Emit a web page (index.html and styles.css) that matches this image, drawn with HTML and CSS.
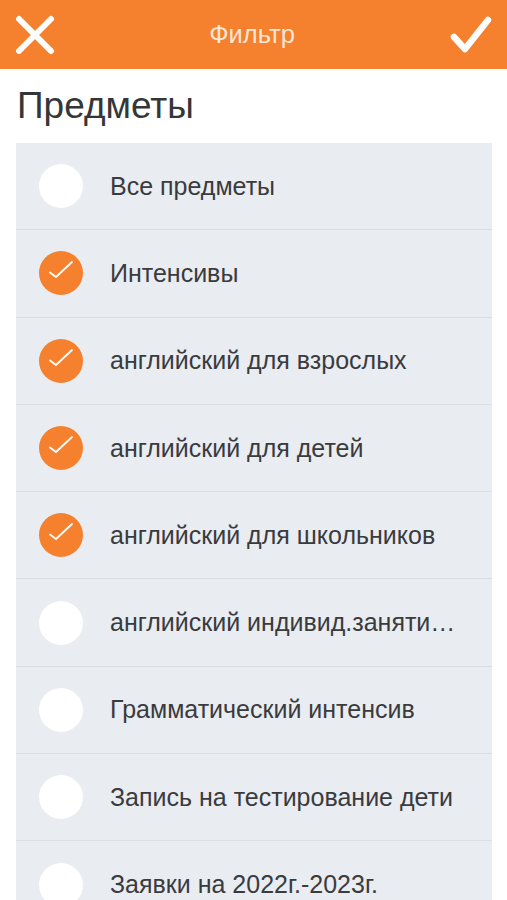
FILE: index.html
```html
<!DOCTYPE html>
<html lang="ru">
<head>
<meta charset="utf-8">
<title>Фильтр</title>
<link rel="stylesheet" href="styles.css">
</head>
<body>
<header class="topbar">
  <button class="icon-btn" aria-label="Закрыть">
    <svg width="40" height="40" viewBox="0 0 40 40"><path d="M4 4 L36 36 M36 4 L4 36" stroke="#fff" stroke-width="6" stroke-linecap="round" fill="none"/></svg>
  </button>
  <div class="topbar-title">Фильтр</div>
  <button class="icon-btn" aria-label="Готово">
    <svg width="44" height="40" viewBox="0 0 44 40"><path d="M5 22 L16 34 L39 5" stroke="#fff" stroke-width="6.5" stroke-linecap="round" stroke-linejoin="round" fill="none"/></svg>
  </button>
</header>
<main class="content">
  <h1 class="section-title">Предметы</h1>
  <ul class="list">
    <li class="row"><span class="radio"></span><span class="label">Все предметы</span></li>
    <li class="row"><span class="radio checked"><svg width="44" height="44" viewBox="0 0 44 44"><path d="M11 21.5 L17 26 L33 11" stroke="#fff" stroke-width="1.8" stroke-linecap="round" stroke-linejoin="round" fill="none"/></svg></span><span class="label">Интенсивы</span></li>
    <li class="row"><span class="radio checked"><svg width="44" height="44" viewBox="0 0 44 44"><path d="M11 21.5 L17 26 L33 11" stroke="#fff" stroke-width="1.8" stroke-linecap="round" stroke-linejoin="round" fill="none"/></svg></span><span class="label">английский для взрослых</span></li>
    <li class="row"><span class="radio checked"><svg width="44" height="44" viewBox="0 0 44 44"><path d="M11 21.5 L17 26 L33 11" stroke="#fff" stroke-width="1.8" stroke-linecap="round" stroke-linejoin="round" fill="none"/></svg></span><span class="label">английский для детей</span></li>
    <li class="row"><span class="radio checked"><svg width="44" height="44" viewBox="0 0 44 44"><path d="M11 21.5 L17 26 L33 11" stroke="#fff" stroke-width="1.8" stroke-linecap="round" stroke-linejoin="round" fill="none"/></svg></span><span class="label">английский для школьников</span></li>
    <li class="row"><span class="radio"></span><span class="label">английский индивид.заняти…</span></li>
    <li class="row"><span class="radio"></span><span class="label">Грамматический интенсив</span></li>
    <li class="row"><span class="radio"></span><span class="label">Запись на тестирование дети</span></li>
    <li class="row"><span class="radio"></span><span class="label">Заявки на 2022г.-2023г.</span></li>
  </ul>
</main>
</body>
</html>
```
FILE: styles.css
```css
* { box-sizing: border-box; }
html, body { margin: 0; padding: 0; background: #fff; }
body {
  font-family: "Liberation Sans", Arial, sans-serif;
  color: #3a3b3d;
  overflow: hidden;
  height: 900px;
}
.topbar {
  height: 69px;
  background: #f5802e;
  display: flex;
  align-items: center;
  justify-content: space-between;
  padding: 0 14px 0 15px;
}
.icon-btn {
  background: none;
  border: 0;
  padding: 0;
  display: flex;
  align-items: center;
}
.topbar-title {
  color: #fde7d6;
  font-size: 25.5px;
}
.content { padding: 0 15px 0 16px; }
.section-title {
  margin: 0;
  font-weight: normal;
  font-size: 37px;
  line-height: 74px;
  padding-left: 1px;
  color: #353638;
}
.list {
  list-style: none;
  margin: 0;
  padding: 0;
  background: #e9ecf1;
}
.row {
  height: 87.3px;
  display: flex;
  align-items: center;
  padding: 0 30px 0 23px;
  border-bottom: 1px solid #dadde2;
}
.radio {
  flex: none;
  width: 44px;
  height: 44px;
  border-radius: 50%;
  background: #fff;
  display: flex;
  align-items: center;
  justify-content: center;
  margin-right: 27px;
}
.radio.checked { background: #f5802e; }
.label {
  font-size: 25px;
  white-space: nowrap;
}
```
